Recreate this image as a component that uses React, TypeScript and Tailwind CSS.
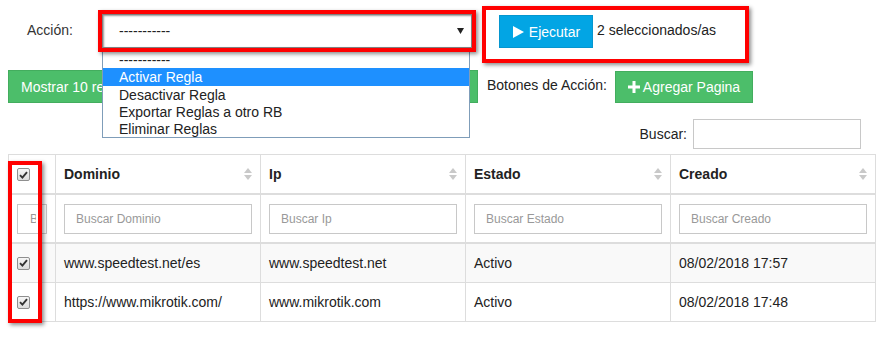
import React from "react";

function SortIcon() {
  return (
    <svg width="8" height="12" viewBox="0 0 8 12">
      <path d="M4 0 L8 5 H0 Z" fill="#c9c9c9" />
      <path d="M0 7 H8 L4 12 Z" fill="#c9c9c9" />
    </svg>
  );
}

function Check() {
  return (
    <div className="w-[13px] h-[13px] rounded-[2px] border border-[#8f8f8f] bg-gradient-to-b from-[#f6f6f6] to-[#dcdcdc] flex items-center justify-center">
      <svg width="9" height="8" viewBox="0 0 9 8">
        <path d="M1 4.2 L3.4 6.6 L8 1.2" stroke="#333" strokeWidth="1.9" fill="none" />
      </svg>
    </div>
  );
}

const cols = ["Dominio", "Ip", "Estado", "Creado"];
const rows = [
  ["www.speedtest.net/es", "www.speedtest.net", "Activo", "08/02/2018 17:57"],
  ["https://www.mikrotik.com/", "www.mikrotik.com", "Activo", "08/02/2018 17:48"],
];

export default function App() {
  return (
    <div className="relative w-[888px] h-[337px] overflow-hidden bg-white text-[14px] leading-[16px] text-[#333] font-['Liberation_Sans',Arial,sans-serif]">
      {/* Row 1 */}
      <div className="flex items-start h-[62px]">
        <div className="ml-[27px] mt-[22px] w-[71px]">Acción:</div>
        <div className="relative z-20 mt-[10px] w-[378px] h-[42px] border-4 border-[#ff0000] shadow-[2px_2px_4px_rgba(0,0,0,0.45)]">
          <div className="w-full h-full bg-white border border-[#808080] shadow-[inset_1px_1px_2px_rgba(0,0,0,0.4)] flex items-center justify-between pl-[16px] pr-[7px]">
            <span className="text-[#222]">-----------</span>
            <svg width="7" height="6" viewBox="0 0 7 6">
              <path d="M0 0 H7 L3.5 6 Z" fill="#222" />
            </svg>
          </div>
        </div>
        <div className="relative z-20 ml-[6px] mt-[6px] w-[267px] h-[57px] border-4 border-[#ff0000] shadow-[2px_2px_4px_rgba(0,0,0,0.45)] flex items-start pl-[13px] pt-[5px]">
          <div className="w-[94px] h-[33px] bg-[#02a5e4] border border-[#0596cf] flex items-center justify-center gap-[5px] text-white pl-[1px]">
            <svg width="11" height="12" viewBox="0 0 11 12">
              <path d="M0 0 L11 6 L0 12 Z" fill="#fff" />
            </svg>
            <span>Ejecutar</span>
          </div>
          <div className="ml-[4px] mt-[7px] text-[#222]">2 seleccionados/as</div>
        </div>
      </div>

      {/* Row 2 */}
      <div className="flex items-start mt-[8px] h-[33px]">
        <div className="ml-[8px] w-[470px] h-[33px] bg-[#4cbe6a] border border-[#43ad5e] text-white flex items-center pl-[12px]">
          <div className="w-[82px] overflow-hidden whitespace-nowrap">Mostrar 10 registros</div>
        </div>
        <div className="ml-[9px] mt-[7px] w-[128px] text-[#222] whitespace-nowrap">Botones de Acción:</div>
        <div className="mt-[1px] w-[138px] h-[32px] bg-[#4cbe6a] border border-[#43ad5e] text-white flex items-center justify-center gap-[3px]">
          <svg width="12" height="12" viewBox="0 0 12 12">
            <path d="M4.5 0 H7.5 V4.5 H12 V7.5 H7.5 V12 H4.5 V7.5 H0 V4.5 H4.5 Z" fill="#fff" />
          </svg>
          <span>Agregar Pagina</span>
        </div>
      </div>

      {/* Row 3 */}
      <div className="flex items-center justify-end pr-[27px] mt-[16px] h-[30px] gap-[6px]">
        <span className="text-[#222]">Buscar:</span>
        <div className="w-[168px] h-[30px] border border-[#c8c8c8] bg-white" />
      </div>

      {/* Table */}
      <div className="ml-[8px] mt-[5px] w-[868px] border border-[#dddddd]">
        <div className="grid grid-cols-[47px_205px_205px_205px_204px] h-[40px] border-b-2 border-[#dddddd]">
          <div className="border-r border-[#dddddd] pl-[8px] pt-[13px]">
            <Check />
          </div>
          {cols.map((c, i) => (
            <div
              key={c}
              className={`flex items-center justify-between pl-[8px] pr-[8px] font-bold text-[#222] ${i < 3 ? "border-r border-[#dddddd]" : ""}`}
            >
              <span>{c}</span>
              <SortIcon />
            </div>
          ))}
        </div>
        <div className="grid grid-cols-[47px_205px_205px_205px_204px] h-[49px] border-b-2 border-[#dddddd]">
          <div className="border-r border-[#dddddd] px-[8px] pt-[9px]">
            <input
              readOnly
              placeholder="Buscar"
              className="w-[30px] h-[30px] border border-[#c8c8c8] pl-[12px] pr-[10px] text-[12px] placeholder:text-[#999] outline-none bg-white"
            />
          </div>
          {cols.map((c, i) => (
            <div key={c} className={`px-[8px] pt-[9px] ${i < 3 ? "border-r border-[#dddddd]" : ""}`}>
              <input
                readOnly
                placeholder={`Buscar ${c}`}
                className="w-full h-[30px] border border-[#c8c8c8] pl-[11px] text-[12px] placeholder:text-[#999] outline-none bg-white"
              />
            </div>
          ))}
        </div>
        {rows.map((r, ri) => (
          <div
            key={ri}
            className={`grid grid-cols-[47px_205px_205px_205px_204px] ${ri === 0 ? "h-[39px] border-b border-[#dddddd] bg-[#f9f9f9]" : "h-[38px] bg-white"}`}
          >
            <div className="border-r border-[#dddddd] pl-[8px] flex items-center">
              <Check />
            </div>
            {r.map((v, i) => (
              <div key={i} className={`flex items-center pl-[8px] text-[#222] ${i < 3 ? "border-r border-[#dddddd]" : ""}`}>
                {v}
              </div>
            ))}
          </div>
        ))}
      </div>

      {/* Dropdown list */}
      <div className="absolute z-10 left-[102px] top-[50px] w-[368px] h-[88px] bg-white border border-[#7f9db9] text-[#222]">
        <div className="h-[17px] pl-[16px] flex items-center">-----------</div>
        <div className="h-[18px] pl-[16px] flex items-center bg-[#1e90ff] text-white">Activar Regla</div>
        <div className="h-[17px] pl-[16px] flex items-center">Desactivar Regla</div>
        <div className="h-[17px] pl-[16px] flex items-center">Exportar Reglas a otro RB</div>
        <div className="h-[17px] pl-[16px] flex items-center">Eliminar Reglas</div>
      </div>

      {/* Checkbox column annotation */}
      <div className="absolute z-20 left-[8px] top-[161px] w-[34px] h-[162px] border-4 border-[#ff0000] shadow-[2px_2px_4px_rgba(0,0,0,0.45)]" />
    </div>
  );
}
